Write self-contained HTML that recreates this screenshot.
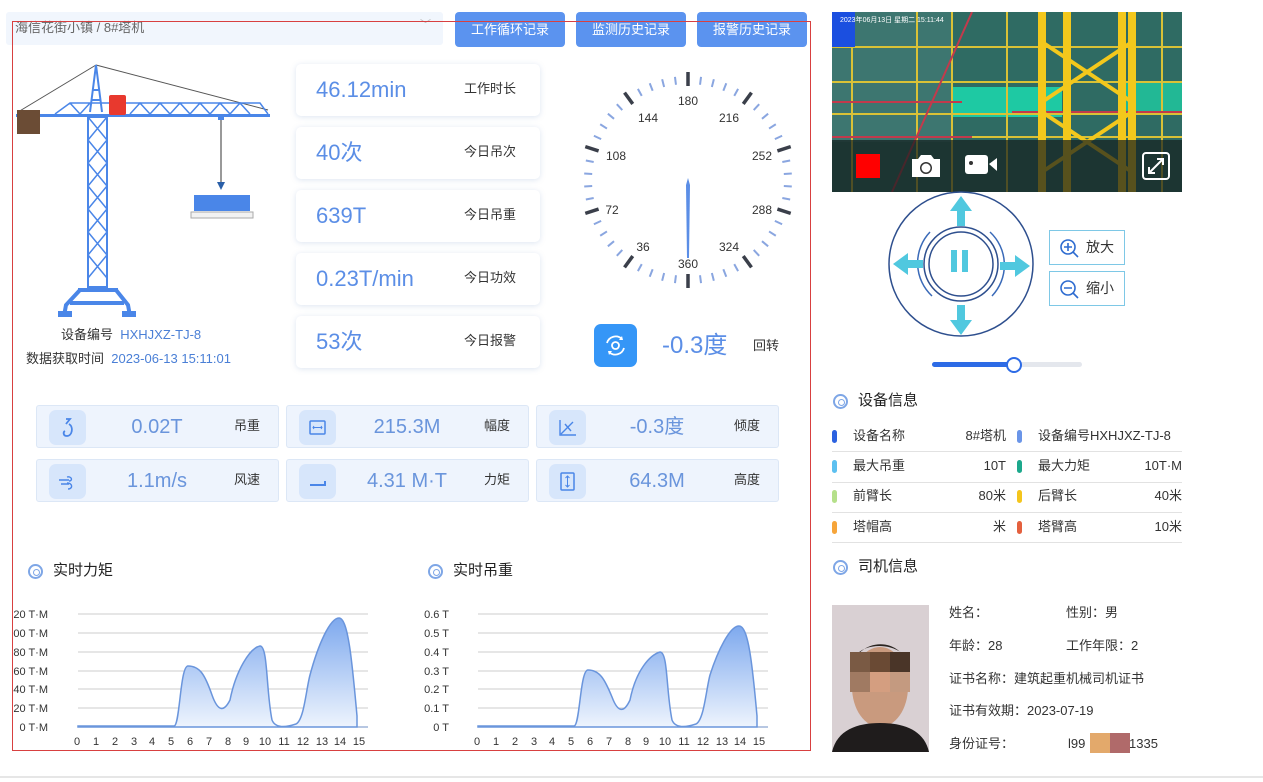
<!DOCTYPE html>
<html><head><meta charset="utf-8">
<style>
*{margin:0;padding:0;box-sizing:border-box}
body{width:1263px;height:782px;position:relative;background:#fff;font-family:"Liberation Sans","Noto Sans CJK SC",sans-serif;overflow:hidden;color:#333;line-height:1.15}
.a{position:absolute}
.sel{left:6px;top:12px;width:437px;height:33px;background:#f1f6fd;border-radius:3px;font-size:13px;color:#666;padding:9px 9px}
.btn{top:12px;width:110px;height:35px;background:#5b93ef;border-radius:4px;color:#fff;font-size:13px;text-align:center;line-height:35px}
.card{left:296px;width:244px;height:52px;background:#fff;border-radius:5px;box-shadow:0 1px 6px rgba(120,150,200,.25)}
.card .v{position:absolute;left:20px;top:13px;font-size:22px;color:#5b8ee6}
.card .l{position:absolute;left:168px;top:18px;font-size:13px;color:#333}
.s{width:243px;height:43px;background:#eef4fd;border:1px solid #dce7f6;border-radius:3px}
.s .i{position:absolute;left:12px;top:4px;width:37px;height:35px;background:#d7e6fb;border-radius:7px}
.s .v{position:absolute;left:60px;width:120px;text-align:center;top:10px;font-size:20px;color:#6a95dc}
.s .l{position:absolute;left:197px;top:13px;font-size:13px;color:#333}
.tt{font-size:15px;color:#222}
.ring{width:15px;height:15px;border:2px solid #7ea6e6;border-radius:50%}
.ring:after{content:"";position:absolute;left:3px;top:3px;width:5px;height:5px;border:1.5px solid #7ea6e6;border-radius:50%}
.row{font-size:13px;color:#333}
.pill{width:5px;height:13px;border-radius:3px}
.zb{left:1049px;width:76px;height:35px;border:1px solid #7ec8e6;font-size:14px;color:#333}
.f{font-size:13px;color:#333}
</style></head><body>
<div class="a sel">海信花街小镇 / 8#塔机<span style="position:absolute;right:12px;top:7px;color:#bbb;font-size:11px">﹀</span></div>
<div class="a btn" style="left:455px">工作循环记录</div>
<div class="a btn" style="left:576px">监测历史记录</div>
<div class="a btn" style="left:697px">报警历史记录</div>
<div class="a" style="left:12px;top:21px;width:799px;height:730px;border:1px solid #d84040"></div>

<svg class="a" style="left:0;top:0" width="290" height="330">
<line x1="96" y1="65" x2="18" y2="112" stroke="#555" stroke-width="1"/>
<line x1="96" y1="65" x2="268" y2="110" stroke="#555" stroke-width="1"/>
<path d="M90 112 L96 65 L102 112 M92 90 L100 90 M91 100 L101 100" stroke="#4a86e8" stroke-width="2" fill="none"/>
<rect x="16" y="114" width="254" height="3" fill="#4a86e8"/>
<path d="M55 114 L70 103 L260 103 L268 114 M70 103 L80 114 L90 103 M130 114 L140 103 L150 114 L160 103 L170 114 L180 103 L190 114 L200 103 L210 114 L220 103 L230 114 L240 103 L250 114" stroke="#4a86e8" stroke-width="1.5" fill="none"/>
<rect x="109" y="95" width="17" height="20" rx="2" fill="#e8392e"/>
<rect x="17" y="110" width="23" height="24" fill="#6b4c35"/>
<rect x="88" y="117" width="19" height="170" fill="none" stroke="#4a86e8" stroke-width="2"/>
<path d="M88 117 L107 140 L88 163 L107 186 L88 209 L107 232 L88 255 L107 278 M107 117 L88 140 L107 163 L88 186 L107 209 L88 232 L107 255 L88 278" stroke="#4a86e8" stroke-width="1.5" fill="none"/>
<path d="M78 290 L118 290 M80 290 L66 305 L64 316 M116 290 L128 305 L130 316 M70 303 L124 303" stroke="#4a86e8" stroke-width="4" fill="none"/>
<rect x="58" y="311" width="14" height="6" fill="#4a86e8"/><rect x="122" y="311" width="14" height="6" fill="#4a86e8"/>
<rect x="218" y="117" width="6" height="3" fill="#4a86e8"/>
<line x1="221" y1="120" x2="221" y2="185" stroke="#999" stroke-width="2"/>
<path d="M217 182 L225 182 L221 190 Z" fill="#2a5fa8"/>
<rect x="194" y="195" width="56" height="16" fill="#4a86e8"/>
<rect x="191" y="212" width="62" height="6" fill="#f2f2f2" stroke="#aaa"/>
</svg>
<div class="a" style="left:61px;top:328px;font-size:13px;color:#333">设备编号 &nbsp;<span style="color:#4a7fd6">HXHJXZ-TJ-8</span></div>
<div class="a" style="left:26px;top:352px;font-size:13px;color:#333">数据获取时间 &nbsp;<span style="color:#4a7fd6">2023-06-13 15:11:01</span></div>

<div class="a card" style="top:64px"><span class="v">46.12min</span><span class="l">工作时长</span></div>
<div class="a card" style="top:127px"><span class="v">40次</span><span class="l">今日吊次</span></div>
<div class="a card" style="top:190px"><span class="v">639T</span><span class="l">今日吊重</span></div>
<div class="a card" style="top:253px"><span class="v">0.23T/min</span><span class="l">今日功效</span></div>
<div class="a card" style="top:316px"><span class="v">53次</span><span class="l">今日报警</span></div>

<svg class="a" style="left:560px;top:60px" width="250" height="260" viewBox="560 60 250 260">
<g stroke="#8aa6e0" stroke-width="2">
<line x1="688" y1="76" x2="688" y2="84" transform="rotate(7.2 688 180)"/><line x1="688" y1="76" x2="688" y2="84" transform="rotate(14.4 688 180)"/><line x1="688" y1="76" x2="688" y2="84" transform="rotate(21.6 688 180)"/><line x1="688" y1="76" x2="688" y2="84" transform="rotate(28.8 688 180)"/>
<line x1="688" y1="76" x2="688" y2="84" transform="rotate(43.2 688 180)"/><line x1="688" y1="76" x2="688" y2="84" transform="rotate(50.4 688 180)"/><line x1="688" y1="76" x2="688" y2="84" transform="rotate(57.6 688 180)"/><line x1="688" y1="76" x2="688" y2="84" transform="rotate(64.8 688 180)"/>
<line x1="688" y1="76" x2="688" y2="84" transform="rotate(79.2 688 180)"/><line x1="688" y1="76" x2="688" y2="84" transform="rotate(86.4 688 180)"/><line x1="688" y1="76" x2="688" y2="84" transform="rotate(93.6 688 180)"/><line x1="688" y1="76" x2="688" y2="84" transform="rotate(100.8 688 180)"/>
<line x1="688" y1="76" x2="688" y2="84" transform="rotate(115.2 688 180)"/><line x1="688" y1="76" x2="688" y2="84" transform="rotate(122.4 688 180)"/><line x1="688" y1="76" x2="688" y2="84" transform="rotate(129.6 688 180)"/><line x1="688" y1="76" x2="688" y2="84" transform="rotate(136.8 688 180)"/>
<line x1="688" y1="76" x2="688" y2="84" transform="rotate(151.2 688 180)"/><line x1="688" y1="76" x2="688" y2="84" transform="rotate(158.4 688 180)"/><line x1="688" y1="76" x2="688" y2="84" transform="rotate(165.6 688 180)"/><line x1="688" y1="76" x2="688" y2="84" transform="rotate(172.8 688 180)"/>
<line x1="688" y1="76" x2="688" y2="84" transform="rotate(187.2 688 180)"/><line x1="688" y1="76" x2="688" y2="84" transform="rotate(194.4 688 180)"/><line x1="688" y1="76" x2="688" y2="84" transform="rotate(201.6 688 180)"/><line x1="688" y1="76" x2="688" y2="84" transform="rotate(208.8 688 180)"/>
<line x1="688" y1="76" x2="688" y2="84" transform="rotate(223.2 688 180)"/><line x1="688" y1="76" x2="688" y2="84" transform="rotate(230.4 688 180)"/><line x1="688" y1="76" x2="688" y2="84" transform="rotate(237.6 688 180)"/><line x1="688" y1="76" x2="688" y2="84" transform="rotate(244.8 688 180)"/>
<line x1="688" y1="76" x2="688" y2="84" transform="rotate(259.2 688 180)"/><line x1="688" y1="76" x2="688" y2="84" transform="rotate(266.4 688 180)"/><line x1="688" y1="76" x2="688" y2="84" transform="rotate(273.6 688 180)"/><line x1="688" y1="76" x2="688" y2="84" transform="rotate(280.8 688 180)"/>
<line x1="688" y1="76" x2="688" y2="84" transform="rotate(295.2 688 180)"/><line x1="688" y1="76" x2="688" y2="84" transform="rotate(302.4 688 180)"/><line x1="688" y1="76" x2="688" y2="84" transform="rotate(309.6 688 180)"/><line x1="688" y1="76" x2="688" y2="84" transform="rotate(316.8 688 180)"/>
<line x1="688" y1="76" x2="688" y2="84" transform="rotate(331.2 688 180)"/><line x1="688" y1="76" x2="688" y2="84" transform="rotate(338.4 688 180)"/><line x1="688" y1="76" x2="688" y2="84" transform="rotate(345.6 688 180)"/><line x1="688" y1="76" x2="688" y2="84" transform="rotate(352.8 688 180)"/>
</g>
<g stroke="#3a3f4a" stroke-width="3.5">
<line x1="688" y1="72" x2="688" y2="86"/><line x1="688" y1="72" x2="688" y2="86" transform="rotate(36 688 180)"/><line x1="688" y1="72" x2="688" y2="86" transform="rotate(72 688 180)"/><line x1="688" y1="72" x2="688" y2="86" transform="rotate(108 688 180)"/><line x1="688" y1="72" x2="688" y2="86" transform="rotate(144 688 180)"/><line x1="688" y1="72" x2="688" y2="86" transform="rotate(180 688 180)"/><line x1="688" y1="72" x2="688" y2="86" transform="rotate(216 688 180)"/><line x1="688" y1="72" x2="688" y2="86" transform="rotate(252 688 180)"/><line x1="688" y1="72" x2="688" y2="86" transform="rotate(288 688 180)"/><line x1="688" y1="72" x2="688" y2="86" transform="rotate(324 688 180)"/>
</g>
<g font-size="12" fill="#333" text-anchor="middle" font-family="Liberation Sans,sans-serif">
<text x="688" y="105">180</text><text x="729" y="122">216</text><text x="762" y="160">252</text><text x="762" y="214">288</text><text x="729" y="251">324</text><text x="688" y="268">360</text><text x="643" y="251">36</text><text x="612" y="214">72</text><text x="616" y="160">108</text><text x="648" y="122">144</text>
</g>
<path d="M688 178 L690 185 L689 258 L687 258 L686 185 Z" fill="#5b8ee6"/>
</svg>
<div class="a" style="left:594px;top:324px;width:43px;height:43px;background:#3596f7;border-radius:7px">
<svg width="43" height="43"><circle cx="21.5" cy="21.5" r="3.5" fill="none" stroke="#fff" stroke-width="1.8"/><path d="M13 19 A9 9 0 0 1 28 15 M30 24 A9 9 0 0 1 15 28" fill="none" stroke="#fff" stroke-width="1.8"/><path d="M28 12 L29 16 L25 16Z M15 31 L14 27 L18 27Z" fill="#fff"/></svg></div>
<div class="a" style="left:662px;top:332px;font-size:24px;color:#5b8ee6">-0.3度</div>
<div class="a" style="left:753px;top:339px;font-size:13px">回转</div>

<div class="a s" style="left:36px;top:405px"><div class="i"><svg width="37" height="35"><path d="M17 9 L21 9 L17 14 M20 14 C25 17 23 26 18 26 C14 26 14 22 16 21" fill="none" stroke="#4a86e8" stroke-width="1.8"/></svg></div><span class="v">0.02T</span><span class="l">吊重</span></div>
<div class="a s" style="left:286px;top:405px"><div class="i"><svg width="37" height="35"><rect x="11" y="11" width="15" height="13" rx="1" fill="none" stroke="#4a86e8" stroke-width="1.5"/><path d="M14 17.5 L23 17.5 M15 16 L14 17.5 L15 19 M22 16 L23 17.5 L22 19" stroke="#4a86e8" fill="none"/></svg></div><span class="v">215.3M</span><span class="l">幅度</span></div>
<div class="a s" style="left:536px;top:405px"><div class="i"><svg width="37" height="35"><path d="M11 10 L11 25 L27 25 M12 24 L24 12 M16 14 L22 21" stroke="#4a86e8" stroke-width="1.4" fill="none"/></svg></div><span class="v">-0.3度</span><span class="l">倾度</span></div>
<div class="a s" style="left:36px;top:459px"><div class="i"><svg width="37" height="35"><path d="M10 16 L20 16 M12 20 L20 20 M18 13 C23 12 24 17 20 17 M18 19 C24 19 24 25 19 25" stroke="#4a86e8" stroke-width="1.4" fill="none"/></svg></div><span class="v">1.1m/s</span><span class="l">风速</span></div>
<div class="a s" style="left:286px;top:459px"><div class="i"><svg width="37" height="35"><path d="M11 21 L26 21 L26 17" stroke="#4a86e8" stroke-width="2" fill="none"/></svg></div><span class="v">4.31 M·T</span><span class="l">力矩</span></div>
<div class="a s" style="left:536px;top:459px"><div class="i"><svg width="37" height="35"><rect x="12" y="9" width="13" height="17" rx="1" fill="none" stroke="#4a86e8" stroke-width="1.5"/><path d="M18.5 12 L18.5 23 M16.5 14 L18.5 12 L20.5 14 M16.5 21 L18.5 23 L20.5 21" stroke="#4a86e8" fill="none"/></svg></div><span class="v">64.3M</span><span class="l">高度</span></div>

<div class="a ring" style="left:28px;top:564px"></div><div class="a tt" style="left:53px;top:562px">实时力矩</div>
<div class="a ring" style="left:428px;top:564px"></div><div class="a tt" style="left:453px;top:562px">实时吊重</div>

<svg class="a" style="left:0;top:595px" width="800" height="160" viewBox="0 595 800 160" font-family="Liberation Sans,sans-serif">
<defs><linearGradient id="g" x1="0" y1="0" x2="0" y2="1"><stop offset="0" stop-color="#7ea9ee"/><stop offset="1" stop-color="#eef4fd"/></linearGradient></defs>
<g stroke="#ccc" stroke-width="1"><path d="M78 614H368M78 633H368M78 652H368M78 671H368M78 689H368M78 708H368M478 614H768M478 633H768M478 652H768M478 671H768M478 689H768M478 708H768"/></g>
<g stroke="#6f8fc6"><path d="M78 727H368M478 727H768"/></g>
<g font-size="11" fill="#333" text-anchor="end">
<text x="48" y="618">20 T·M</text><text x="48" y="637">00 T·M</text><text x="48" y="656">80 T·M</text><text x="48" y="675">60 T·M</text><text x="48" y="693">40 T·M</text><text x="48" y="712">20 T·M</text><text x="48" y="731">0 T·M</text>
<text x="449" y="618">0.6 T</text><text x="449" y="637">0.5 T</text><text x="449" y="656">0.4 T</text><text x="449" y="675">0.3 T</text><text x="449" y="693">0.2 T</text><text x="449" y="712">0.1 T</text><text x="449" y="731">0 T</text>
</g>
<g font-size="11" fill="#333" text-anchor="middle">
<text x="77" y="745">0</text><text x="96" y="745">1</text><text x="115" y="745">2</text><text x="134" y="745">3</text><text x="152" y="745">4</text><text x="171" y="745">5</text><text x="190" y="745">6</text><text x="209" y="745">7</text><text x="228" y="745">8</text><text x="246" y="745">9</text><text x="265" y="745">10</text><text x="284" y="745">11</text><text x="303" y="745">12</text><text x="322" y="745">13</text><text x="340" y="745">14</text><text x="359" y="745">15</text>
<text x="477" y="745">0</text><text x="496" y="745">1</text><text x="515" y="745">2</text><text x="534" y="745">3</text><text x="552" y="745">4</text><text x="571" y="745">5</text><text x="590" y="745">6</text><text x="609" y="745">7</text><text x="628" y="745">8</text><text x="646" y="745">9</text><text x="665" y="745">10</text><text x="684" y="745">11</text><text x="703" y="745">12</text><text x="722" y="745">13</text><text x="740" y="745">14</text><text x="759" y="745">15</text>
</g>
<path d="M78 726 L174 726 C180 726 180 666 188 666 C200 666 205 675 212 695 C218 712 224 712 230 700 C236 670 250 648 260 646 C268 646 266 690 272 720 C276 730 290 726 296 724 C304 720 306 690 310 675 C318 645 330 618 339 618 C348 618 352 660 357 716 L357 727 L78 727Z" fill="url(#g)" stroke="#6a95dc" stroke-width="1.5"/>
<path d="M478 726 L574 726 C580 726 580 670 588 670 C600 670 605 680 612 697 C618 713 624 713 630 700 C636 670 650 655 660 652 C668 652 666 690 672 720 C676 730 690 726 696 724 C704 720 706 690 710 675 C718 650 730 626 739 626 C748 626 752 660 757 716 L757 727 L478 727Z" fill="url(#g)" stroke="#6a95dc" stroke-width="1.5"/>
</svg>

<div class="a" style="left:832px;top:12px;width:350px;height:180px;overflow:hidden;background:#2e6a62">
<svg width="350" height="180">
<rect width="350" height="180" fill="#2f6b63"/>
<rect x="0" y="0" width="120" height="130" fill="#3d7670"/>
<rect x="120" y="75" width="110" height="30" fill="#1ec9a3"/>
<rect x="290" y="70" width="60" height="30" fill="#22b895"/>
<g stroke="#d9c236" stroke-width="2"><path d="M0 35H350M0 70H350M0 102H350M0 125H350M20 0V180M85 0V180M120 0V180M175 0V180M300 0V180M330 0V180"/></g>
<g stroke="#c23a4c" stroke-width="2"><path d="M0 90H130M0 125H140M180 100H350M60 180L140 0"/></g>
<g stroke="#f3c81c" stroke-width="8"><path d="M210 0V180M235 0V180M290 0V180M300 0V180"/></g>
<g stroke="#f3c81c" stroke-width="4"><path d="M210 30L300 90M300 30L210 90M210 100L300 160M300 100L210 160"/></g>
<rect x="0" y="0" width="23" height="35" fill="#1b4fe0"/>
<text x="8" y="10" font-size="7" fill="#fff" font-family="Liberation Sans,sans-serif">2023年06月13日 星期二 15:11:44</text>
<rect x="0" y="128" width="350" height="52" fill="rgba(20,30,30,.7)"/>
<rect x="24" y="142" width="24" height="24" fill="#f00"/>
<path d="M80 147 h6 l3 -4 h10 l3 4 h6 v18 h-28z" fill="#fff"/><circle cx="94" cy="156" r="6" fill="#333"/><circle cx="94" cy="156" r="4.5" fill="#fff"/>
<rect x="133" y="143" width="23" height="19" rx="3" fill="#fff"/><path d="M157 152 L165 146 L165 159Z" fill="#fff"/><circle cx="139" cy="151" r="2" fill="#333"/>
<rect x="311" y="141" width="26" height="26" rx="3" fill="none" stroke="#fff" stroke-width="2"/><path d="M317 161 L331 147 M325 147 L331 147 L331 153 M317 155 L317 161 L323 161" stroke="#fff" stroke-width="2" fill="none"/>
</svg></div>

<svg class="a" style="left:885px;top:190px" width="150" height="150" viewBox="885 190 150 150">
<circle cx="961" cy="264" r="72" fill="none" stroke="#2e4f8e" stroke-width="1.5"/>
<circle cx="961" cy="264" r="37" fill="none" stroke="#2e4f8e" stroke-width="1.5"/>
<circle cx="961" cy="264" r="32" fill="none" stroke="#2e4f8e" stroke-width="1.5"/>
<path d="M990 232 A45 45 0 0 1 992 296 M932 296 A45 45 0 0 1 930 232" fill="none" stroke="#3a6ab8" stroke-width="1.5"/>
<g fill="#50c8df"><path d="M961 196 L972 211 L965 211 L965 226 L957 226 L957 211 L950 211Z"/><path d="M961 335 L972 320 L965 320 L965 305 L957 305 L957 320 L950 320Z"/><path d="M893 264 L908 253 L908 260 L923 260 L923 268 L908 268 L908 275Z"/><path d="M1030 266 L1015 255 L1015 262 L1000 262 L1000 270 L1015 270 L1015 277Z"/>
<rect x="951" y="250" width="6" height="22"/><rect x="962" y="250" width="6" height="22"/></g>
</svg>
<div class="a zb" style="top:230px"><svg class="a" style="left:9px;top:7px" width="22" height="22"><circle cx="9" cy="9" r="7" fill="none" stroke="#2d6bd0" stroke-width="1.6"/><path d="M5 9H13M9 5V13M14 14L19 19" stroke="#2d6bd0" stroke-width="1.6"/></svg><span class="a" style="left:36px;top:8px">放大</span></div>
<div class="a zb" style="top:271px"><svg class="a" style="left:9px;top:7px" width="22" height="22"><circle cx="9" cy="9" r="7" fill="none" stroke="#2d6bd0" stroke-width="1.6"/><path d="M5 9H13M14 14L19 19" stroke="#2d6bd0" stroke-width="1.6"/></svg><span class="a" style="left:36px;top:8px">缩小</span></div>
<div class="a" style="left:932px;top:362px;width:150px;height:5px;background:#e4e7ed;border-radius:3px"></div>
<div class="a" style="left:932px;top:362px;width:82px;height:5px;background:#2d6be6;border-radius:3px"></div>
<div class="a" style="left:1006px;top:357px;width:16px;height:16px;border:2px solid #2d6be6;background:#fff;border-radius:50%"></div>

<div class="a ring" style="left:833px;top:394px"></div><div class="a tt" style="left:858px;top:392px">设备信息</div>
<div class="a row" style="left:832px;top:429px;width:350px;height:118px">
<div class="a" style="left:0;top:22px;width:350px;border-top:1px solid #e2e2e2"></div>
<div class="a" style="left:0;top:53px;width:350px;border-top:1px solid #e2e2e2"></div>
<div class="a" style="left:0;top:83px;width:350px;border-top:1px solid #e2e2e2"></div>
<div class="a" style="left:0;top:113px;width:350px;border-top:1px solid #e2e2e2"></div>
<div class="a pill" style="left:0;top:1px;background:#2c62e0"></div><span class="a" style="left:21px;top:0">设备名称</span><span class="a" style="right:176px;top:0">8#塔机</span>
<div class="a pill" style="left:185px;top:1px;background:#6a95e8"></div><span class="a" style="left:206px;top:0">设备编号HXHJXZ-TJ-8</span>
<div class="a pill" style="left:0;top:31px;background:#5cc0f0"></div><span class="a" style="left:21px;top:30px">最大吊重</span><span class="a" style="right:176px;top:30px">10T</span>
<div class="a pill" style="left:185px;top:31px;background:#1ca88c"></div><span class="a" style="left:206px;top:30px">最大力矩</span><span class="a" style="right:0;top:30px">10T·M</span>
<div class="a pill" style="left:0;top:61px;background:#b5e08a"></div><span class="a" style="left:21px;top:60px">前臂长</span><span class="a" style="right:176px;top:60px">80米</span>
<div class="a pill" style="left:185px;top:61px;background:#f4c51c"></div><span class="a" style="left:206px;top:60px">后臂长</span><span class="a" style="right:0;top:60px">40米</span>
<div class="a pill" style="left:0;top:92px;background:#f6a53a"></div><span class="a" style="left:21px;top:91px">塔帽高</span><span class="a" style="right:176px;top:91px">米</span>
<div class="a pill" style="left:185px;top:92px;background:#e4603e"></div><span class="a" style="left:206px;top:91px">塔臂高</span><span class="a" style="right:0;top:91px">10米</span>
</div>

<div class="a ring" style="left:833px;top:560px"></div><div class="a tt" style="left:858px;top:558px">司机信息</div>
<svg class="a" style="left:832px;top:605px" width="97" height="147">
<rect width="97" height="147" fill="#d9d0d3"/>
<ellipse cx="48" cy="82" rx="28" ry="40" fill="#c99a7e"/>
<path d="M20 70 C18 30 78 28 76 70 L72 50 C60 38 34 38 24 50Z" fill="#2a2420"/>
<path d="M0 147 C5 125 25 118 48 118 C72 118 92 125 97 147Z" fill="#1f1c1c"/>
<rect x="18" y="47" width="20" height="20" fill="#7a5a44"/><rect x="38" y="47" width="20" height="20" fill="#6a4a34"/><rect x="58" y="47" width="20" height="20" fill="#4a3528"/>
<rect x="18" y="67" width="20" height="20" fill="#a07a62"/><rect x="38" y="67" width="20" height="20" fill="#d49e80"/><rect x="58" y="67" width="20" height="20" fill="#c49a80"/>
</svg>
<div class="a f" style="left:949px;top:606px">姓名：</div><div class="a f" style="left:1066px;top:606px">性别：男</div>
<div class="a f" style="left:949px;top:639px">年龄：28</div><div class="a f" style="left:1066px;top:639px">工作年限：2</div>
<div class="a f" style="left:949px;top:672px">证书名称：建筑起重机械司机证书</div>
<div class="a f" style="left:949px;top:704px">证书有效期：2023-07-19</div>
<div class="a f" style="left:949px;top:737px">身份证号：</div>
<div class="a f" style="left:1068px;top:737px">l99</div>
<div class="a" style="left:1090px;top:733px;width:20px;height:20px;background:#e3a96b"></div>
<div class="a" style="left:1110px;top:733px;width:20px;height:20px;background:#b06a6a"></div>
<div class="a f" style="left:1129px;top:737px">1335</div>
<div class="a" style="left:0;top:776px;width:1263px;height:2px;background:#e6e6e6"></div>
</body></html>
